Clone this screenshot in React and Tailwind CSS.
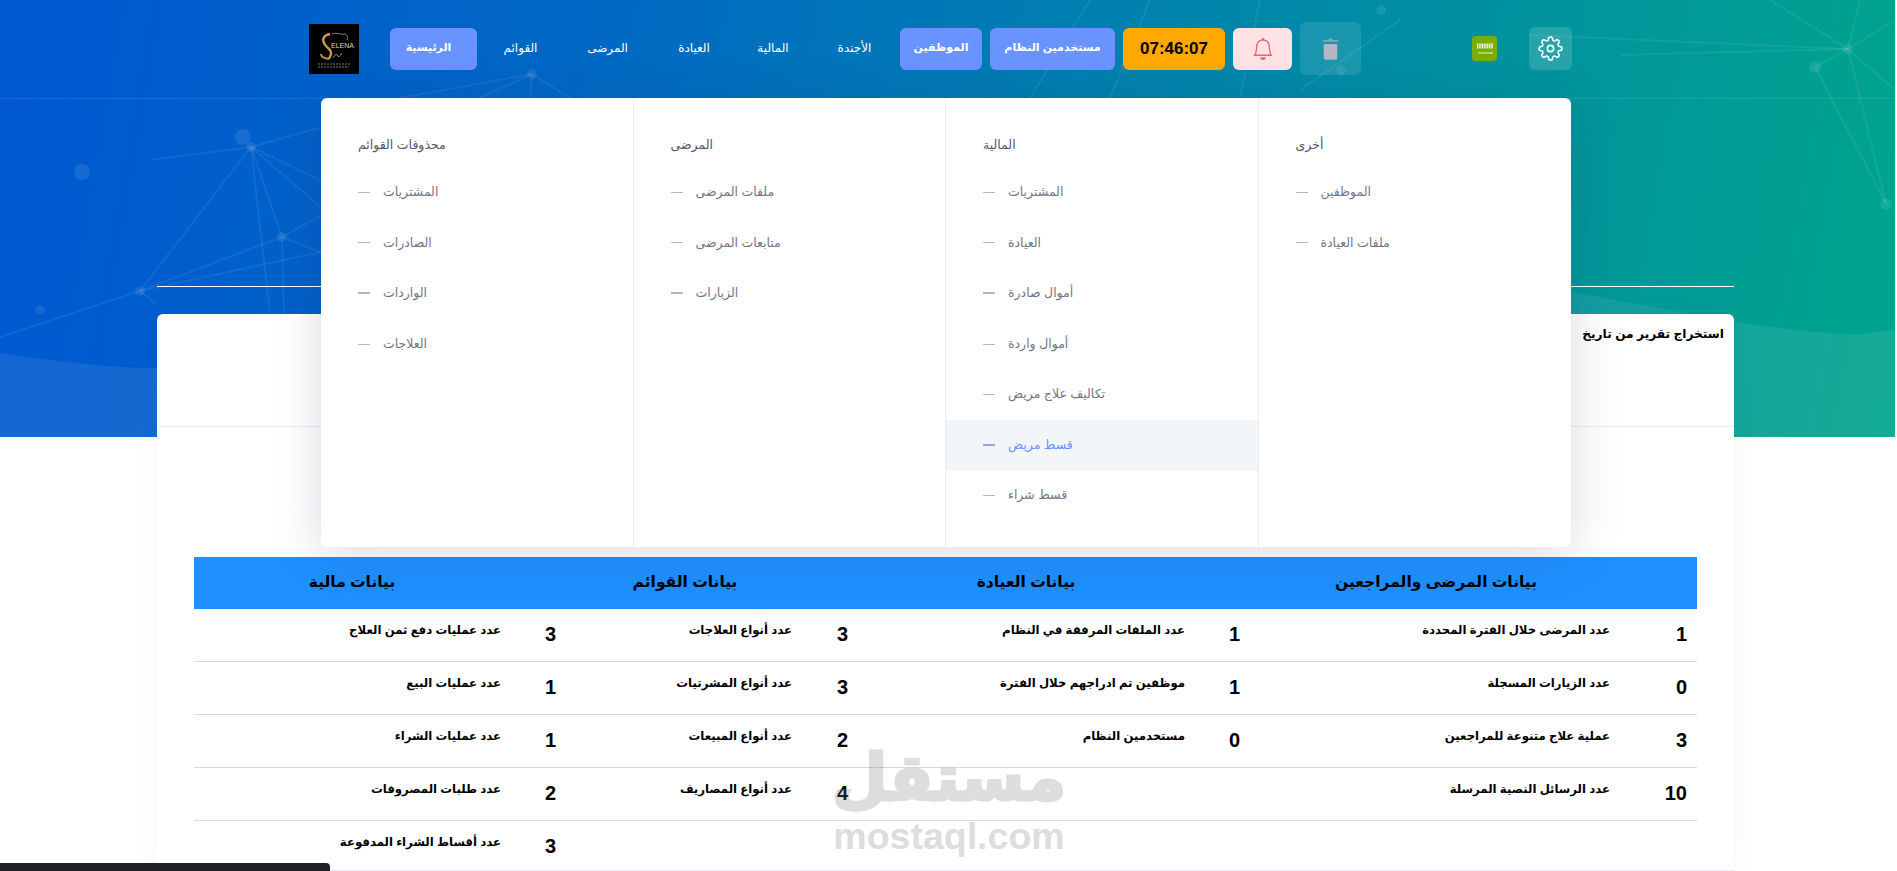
import { BsBell } from "react-icons/bs";
import { FiSettings } from "react-icons/fi";

const navItems = [
  { label: "القوائم", width: "w-[87px]" },
  { label: "المرضى", width: "w-[87px]" },
  { label: "العيادة", width: "w-[86px]" },
  { label: "المالية", width: "w-[72px]" },
  { label: "الأجندة", width: "w-[91px]" },
];

const menuColumns = [
  {
    title: "محذوفات القوائم",
    items: ["المشتريات", "الصادرات", "الواردات", "العلاجات"],
  },
  {
    title: "المرضى",
    items: ["ملفات المرضى", "متابعات المرضى", "الزيارات"],
  },
  {
    title: "المالية",
    items: ["المشتريات", "العيادة", "أموال صادرة", "أموال واردة", "تكاليف علاج مريض", "قسط مريض", "قسط شراء"],
    active: 5,
  },
  {
    title: "أخرى",
    items: ["الموظفين", "ملفات العيادة"],
  },
];

const rows = [
  [["1", "عدد المرضى خلال الفترة المحددة"], ["1", "عدد الملفات المرفقة في النظام"], ["3", "عدد أنواع العلاجات"], ["3", "عدد عمليات دفع ثمن العلاج"]],
  [["0", "عدد الزيارات المسجلة"], ["1", "موظفين تم ادراجهم خلال الفترة"], ["3", "عدد أنواع المشرتيات"], ["1", "عدد عمليات البيع"]],
  [["3", "عملية علاج متنوعة للمراجعين"], ["0", "مستخدمين النظام"], ["2", "عدد أنواع المبيعات"], ["1", "عدد عمليات الشراء"]],
  [["10", "عدد الرسائل النصية المرسلة"], ["", ""], ["4", "عدد أنواع المصاريف"], ["2", "عدد طلبات المصروفات"]],
  [["", ""], ["", ""], ["", ""], ["3", "عدد أقساط الشراء المدفوعة"]],
];

function HeroNetwork() {
  const lines = [
    [140, 291, 251, 147], [140, 291, 282, 237], [140, 291, 330, 250], [140, 291, 0, 337], [140, 291, 157, 305],
    [251, 147, 340, 122], [251, 147, 330, 215], [251, 147, 282, 237], [251, 147, 340, 190], [251, 147, 270, 314],
    [282, 237, 284, 314], [282, 237, 340, 205], [282, 237, 340, 260], [251, 147, 150, 160],
    [532, 74, 400, 98], [532, 74, 480, 98], [532, 74, 530, 98], [532, 74, 570, 98],
    [1848, 49, 1886, 204], [1848, 49, 1815, 67], [1848, 49, 1770, 0], [1848, 49, 1530, 35], [1848, 49, 1895, 20],
    [1848, 49, 1895, 90], [1848, 49, 1860, 0], [1815, 67, 1886, 204], [1848, 49, 1620, 55],
    [1150, 0, 1110, 98], [1260, 0, 1240, 98], [1030, 98, 1090, 0], [1400, 20, 1300, 90],
  ];
  const nodes = [
    [140, 291, 5], [251, 147, 5], [282, 237, 5], [82, 172, 8], [243, 137, 8], [40, 310, 5],
    [532, 74, 5], [1381, 10, 5], [1341, 70, 5], [1848, 49, 5], [1815, 67, 6], [1886, 204, 6],
  ];
  return (
    <svg className="absolute inset-0 h-full w-full" viewBox="0 0 1895 437" fill="none">
      <path d="M0 353C60 362 110 368 157 368C600 372 1200 250 1571 292C1650 305 1780 335 1860 334L1895 330V437H0Z" fill="#ffffff" fillOpacity="0.08" />
      {lines.map(([x1, y1, x2, y2], i) => (
        <line key={i} x1={x1} y1={y1} x2={x2} y2={y2} stroke="#ffffff" strokeOpacity="0.07" strokeWidth="2" />
      ))}
      {nodes.map(([cx, cy, r], i) => (
        <circle key={i} cx={cx} cy={cy} r={r} fill="#ffffff" fillOpacity="0.09" />
      ))}
    </svg>
  );
}

function Logo() {
  return (
    <div className="relative h-[50px] w-[50px] shrink-0 overflow-hidden bg-black">
      <svg className="absolute inset-0" width="50" height="50" viewBox="0 0 50 50" fill="none">
        <path d="M23 10C28 8 31 11 35 10C38 10 39 13 38 16" stroke="#d8d8d8" strokeWidth="0.6" />
        <path d="M24 34L27 30L30 33L33 29" stroke="#d8d8d8" strokeWidth="0.6" />
        <path d="M19 35C14 34 12 33 12 30" stroke="#b98d45" strokeWidth="2" />
        <path d="M21 10C15 11 13 15 15 19C17 24 23 25 22 30C21 34 19 35 19 35" stroke="#c79a4e" strokeWidth="2.4" />
        <line x1="9" y1="40" x2="41" y2="40" stroke="#9a9a9a" strokeWidth="0.8" strokeDasharray="2 1" />
        <line x1="9" y1="43" x2="40" y2="43" stroke="#9a9a9a" strokeWidth="0.8" strokeDasharray="2 1" />
      </svg>
      <span className="absolute left-[22px] top-[17px] text-[7px] leading-[9px] text-[#e5d3a5]">ELENA</span>
    </div>
  );
}

function Flag() {
  return (
    <div className="flex h-[25px] w-[25px] items-center justify-center rounded-[4px] bg-[#79ad0a]">
      <svg width="20" height="14" viewBox="0 0 20 14" fill="none">
        <line x1="2" y1="4" x2="18" y2="4" stroke="#ffffff" strokeWidth="5" strokeDasharray="1 0.7" />
        <line x1="3" y1="11" x2="16" y2="11" stroke="#ffffff" strokeWidth="0.8" />
        <path d="M16 10L18 11L16 12Z" fill="#ffffff" />
      </svg>
    </div>
  );
}

function TrashIcon() {
  return (
    <svg width="27" height="27" viewBox="0 0 24 24" fill="none">
      <path d="M6 8V20.5C6 21.33 6.67 22 7.5 22H16.5C17.33 22 18 21.33 18 20.5V8H6Z" fill="#b5b5c3" />
      <path d="M14 4.5V4C14 3.45 13.55 3 13 3H11C10.45 3 10 3.45 10 4V4.5H5.5C5.22 4.5 5 4.72 5 5V5.5C5 5.78 5.22 6 5.5 6H18.5C18.78 6 19 5.78 19 5.5V5C19 4.72 18.78 4.5 18.5 4.5H14Z" fill="#b5b5c3" fillOpacity="0.6" />
    </svg>
  );
}

function Header() {
  return (
    <div className="relative flex h-[99px] items-start border-b border-white/10 pl-[309px] pt-[24px]">
      <Logo />
      <button className="ml-[31px] mt-[4px] h-[42px] w-[87px] rounded-[6px] bg-[#6993ff] pb-[3px] pr-[10px] text-[11px] font-bold text-white">الرئيسية</button>
      <div className="mt-[4px] flex h-[42px] items-center pb-[2px]">
        {navItems.map((item) => (
          <span key={item.label} className={`${item.width} text-center text-[12px] text-white`}>{item.label}</span>
        ))}
      </div>
      <div className="mt-[4px] flex h-[42px] gap-[8px]">
        <button className="w-[82px] rounded-[6px] bg-[#6993ff] pb-[3px] text-[11px] font-bold text-white">الموظفين</button>
        <button className="w-[125px] rounded-[6px] bg-[#6993ff] pb-[3px] text-[11px] font-bold text-white">مستخدمين النظام</button>
        <div className="flex w-[102px] items-center justify-center rounded-[6px] bg-[#ffa800] text-[17px] font-bold text-black">07:46:07</div>
        <button className="flex w-[59px] items-center justify-center rounded-[6px] bg-[#ffe2e5] text-[#ea6471]">
          <BsBell size={22} />
        </button>
      </div>
      <button className="ml-[8px] mt-[-2px] flex h-[53px] w-[61px] items-center justify-center rounded-[6px] bg-white/10">
        <TrashIcon />
      </button>
      <div className="ml-[111px] mt-[12px]">
        <Flag />
      </div>
      <button className="ml-[32px] mt-[3px] flex h-[43px] w-[43px] items-center justify-center rounded-[6px] bg-white/15 text-white">
        <FiSettings size={25} strokeWidth={1.5} />
      </button>
    </div>
  );
}

function MegaMenu() {
  return (
    <div className="absolute left-[321px] top-[98px] z-10 grid h-[449px] w-[1250px] grid-cols-4 overflow-hidden rounded-[6px] bg-white shadow-[0_8px_50px_rgba(40,40,90,0.17)]">
      {menuColumns.map((col) => (
        <div key={col.title + col.items.length} className="border-r border-[#ebedf3] pt-[35px] last:border-r-0">
          <div className="mb-[10px] flex h-[24px] items-center pl-[37px] text-[12.5px] text-[#55586a]">{col.title}</div>
          {col.items.map((item, i) => {
            const active = col.active === i;
            return (
              <div key={item} className={`flex h-[50.6px] items-center gap-[13px] pl-[37px] text-[12.5px] ${active ? "bg-[#f3f6f9] text-[#6993ff]" : "text-[#747687]"}`}>
                <span className={`w-[12px] ${active ? "h-[2px] bg-[#8ea5e0]" : i === 2 ? "h-[2px] bg-[#b5b5c3]" : "h-px bg-[#b5b5c3]"}`} />
                <span>{item}</span>
              </div>
            );
          })}
        </div>
      ))}
    </div>
  );
}

function StatsTable() {
  return (
    <div dir="rtl" className="ml-[37px] mt-[130px] w-[1503px]">
      <div className="flex h-[52px] items-center bg-[#1e90ff] pb-[2px] text-center text-[15.5px] font-bold text-black">
        <div className="w-[522px]">بيانات المرضى والمراجعين</div>
        <div className="w-[298px]">بيانات العيادة</div>
        <div className="w-[384px]">بيانات القوائم</div>
        <div className="w-[282px]">بيانات مالية</div>
      </div>
      {rows.map((row, r) => (
        <div key={r} className={`grid h-[53px] grid-cols-[77px_370px_55px_337px_56px_236px_55px_1fr] ${r < 4 ? "border-b border-[#d9d9d9]" : ""}`}>
          {row.map(([value, label], c) => [
            <div key={`v${c}`} className="pr-[10px] pt-[12px] text-[20px] font-bold leading-[26px] text-black">{value}</div>,
            <div key={`l${c}`} className="pr-[10px] pt-[11px] text-[11.7px] font-bold leading-[20px] text-black">{label}</div>,
          ])}
        </div>
      ))}
    </div>
  );
}

function Watermark() {
  return (
    <div className="pointer-events-none absolute left-[835px] top-[738px] z-20 flex w-[228px] flex-col items-center text-[#7a7a7a] opacity-25">
      <span className="text-[64px] font-bold leading-[80px] [-webkit-text-stroke:3px_#7a7a7a]">مستقل</span>
      <span className="-mt-[4px] text-[37.5px] font-bold leading-[44px]">mostaql.com</span>
    </div>
  );
}

export default function App() {
  return (
    <div className="relative h-[871px] overflow-hidden bg-white font-['Liberation_Sans','DejaVu_Sans',Arial,sans-serif]">
      <div className="relative mr-[2px] h-[437px] bg-[linear-gradient(100deg,#0058d2_0%,#0068c4_30%,#008ba6_68%,#00a58c_100%)]">
        <HeroNetwork />
        <Header />
        <div className="relative ml-[157px] mt-[187px] h-px w-[1577px] bg-white" />
      </div>
      <div className="relative -mt-[123px] ml-[157px] h-[557px] w-[1577px] rounded-t-[6px] border-b border-[#ececf0] bg-white shadow-[0_0_30px_rgba(40,40,90,0.04)]">
        <div dir="rtl" className="h-[113px] border-b border-[#e9ecef] pr-[10px] pt-[10px] text-[12.2px] font-bold leading-[20px] text-black">
          استخراج تقرير من تاريخ
        </div>
        <StatsTable />
      </div>
      <MegaMenu />
      <Watermark />
      <div className="absolute bottom-0 left-0 z-20 h-[8px] w-[330px] rounded-tr-[4px] bg-[#202124]" />
    </div>
  );
}
